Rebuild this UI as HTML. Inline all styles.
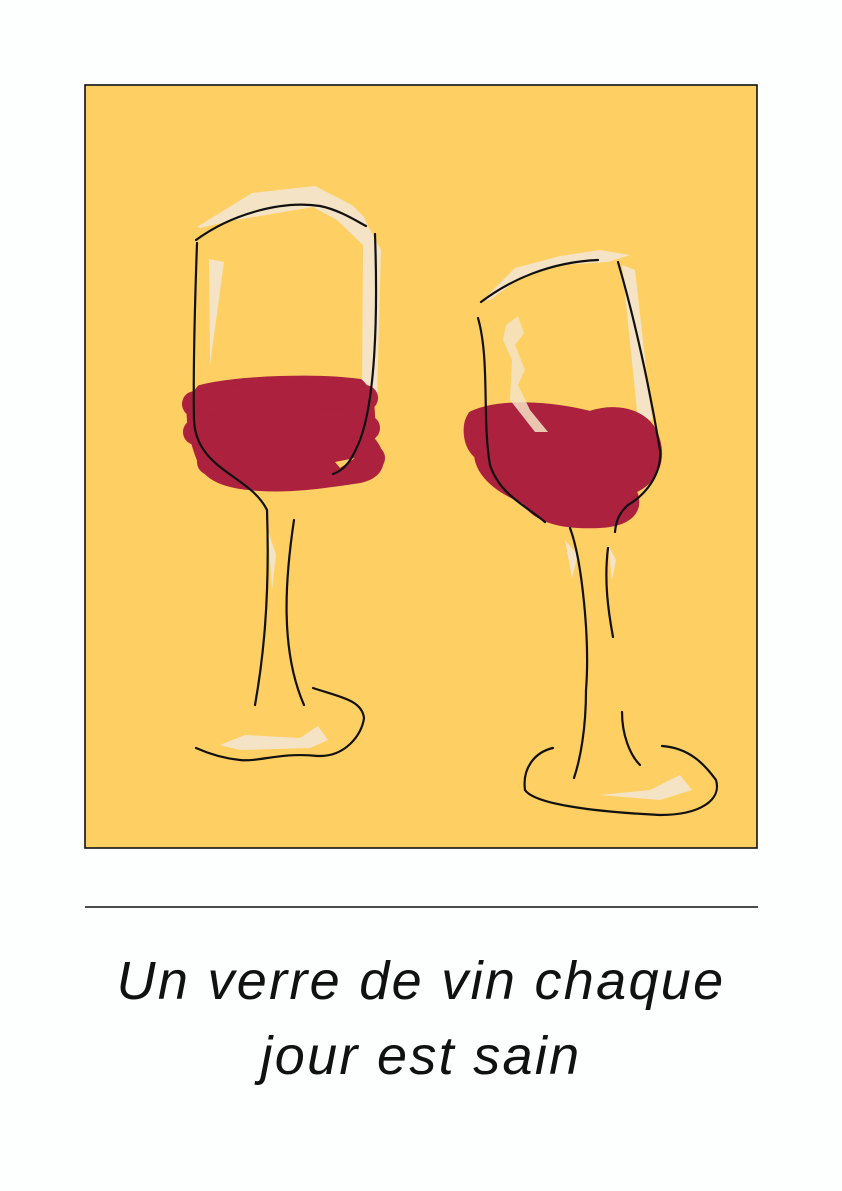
<!DOCTYPE html>
<html><head><meta charset="utf-8"><style>
html,body{margin:0;padding:0;background:#fdfefe;width:842px;height:1191px;overflow:hidden}
svg{position:absolute;left:0;top:0}
.t{position:absolute;left:0;width:842px;text-align:center;font-family:"Liberation Sans",sans-serif;font-style:italic;font-size:54px;color:#111;letter-spacing:2.3px}
</style></head><body>
<svg width="842" height="1191" viewBox="0 0 842 1191">
<rect x="85" y="85" width="672" height="763" fill="#fecf62" stroke="#111" stroke-width="1.6"/>
<g fill="#f5e3c5">
<polygon points="197,227 252,193 315,186 352,205 364,217 369,228 381,250 377,400 362,390 363,245 337,220 313,207 230,221 200,228"/>
<polygon points="209,259 224,262 210,365"/>
<polygon points="220,745 245,735 300,738 318,726 328,740 310,748 240,750"/>
<polygon points="268,530 276,555 272,590"/>
</g>
<!-- left wine -->
<g fill="#ab213e" stroke="#ab213e" stroke-linejoin="round" stroke-linecap="round">
<path stroke-width="6" d="M200,388 C240,378 320,376 360,382 C375,395 372,420 372,440 C385,455 385,475 360,480 C320,486 290,490 260,488 C225,486 205,478 200,460 C192,440 188,420 190,400 Z"/>
<path fill="none" stroke-width="26" d="M195,404 C240,396 320,392 365,398 M196,432 C250,420 330,418 367,428 M210,462 C260,447 340,442 372,458"/>
</g>
<path d="M335,462 L355,458 L340,468 Z" fill="#fecf62"/>
<g fill="none" stroke="#111" stroke-width="2.2" stroke-linecap="round">
<path d="M196,240 C230,215 280,200 320,206 C340,210 358,222 366,226"/>
<path d="M197,243 C195,300 193,370 194,420 C196,470 250,475 267,510 C270,600 263,660 255,705"/>
<path d="M375,234 C378,320 375,400 360,440 C352,460 345,470 333,474"/>
<path d="M294,520 C285,580 280,650 304,705"/>
<path d="M313,688 C340,697 362,700 364,718 C362,735 345,757 318,756 C280,752 260,762 240,760 C220,758 205,752 196,748"/>
</g>
<!-- right glass highlights -->
<g fill="#f5e3c5">
<polygon points="483,300 515,268 560,256 600,250 630,255 608,262 560,265 520,278 490,300"/>
<polygon points="622,265 635,270 652,420 638,420"/>
<polygon points="565,540 578,555 572,578"/>
<polygon points="608,545 616,560 612,580"/>
<polygon points="600,795 650,790 680,775 692,790 660,800"/>
</g>
<!-- right wine -->
<g fill="#ab213e" stroke="#ab213e" stroke-linejoin="round" stroke-linecap="round">
<path stroke-width="8" d="M472,415 C500,402 550,405 590,415 C620,405 650,415 656,440 C662,460 655,480 632,490 C640,505 635,522 600,524 C560,526 535,518 525,500 C500,490 480,475 478,455 C466,445 465,425 472,415 Z"/>
</g>
<polygon points="506,325 518,316 524,333 515,345 525,370 518,385 530,410 548,432 535,432 510,400 512,360 503,340" fill="#f5e3c5" opacity="0.85"/>
<g fill="none" stroke="#111" stroke-width="2.2" stroke-linecap="round">
<path d="M481,302 C510,280 550,262 598,260"/>
<path d="M618,262 C635,320 650,390 660,450 C662,475 645,495 628,505 C620,512 616,520 615,532"/>
<path d="M478,318 C490,360 482,420 490,465 C500,495 525,505 545,522"/>
<path d="M570,528 C582,560 590,640 586,690 C586,730 580,760 574,778"/>
<path d="M608,548 C604,580 608,610 613,637"/>
<path d="M622,712 C622,735 630,755 640,765"/>
<path d="M553,748 C535,752 522,768 525,790 C535,805 600,812 660,815 C700,815 722,800 716,780 C705,765 690,748 662,746"/>
</g>
<line x1="85" y1="907" x2="758" y2="907" stroke="#111" stroke-width="1.6"/>
</svg>
<div class="t" style="top:950px">Un verre de vin chaque</div>
<div class="t" style="top:1025px">jour est sain</div>
</body></html>
